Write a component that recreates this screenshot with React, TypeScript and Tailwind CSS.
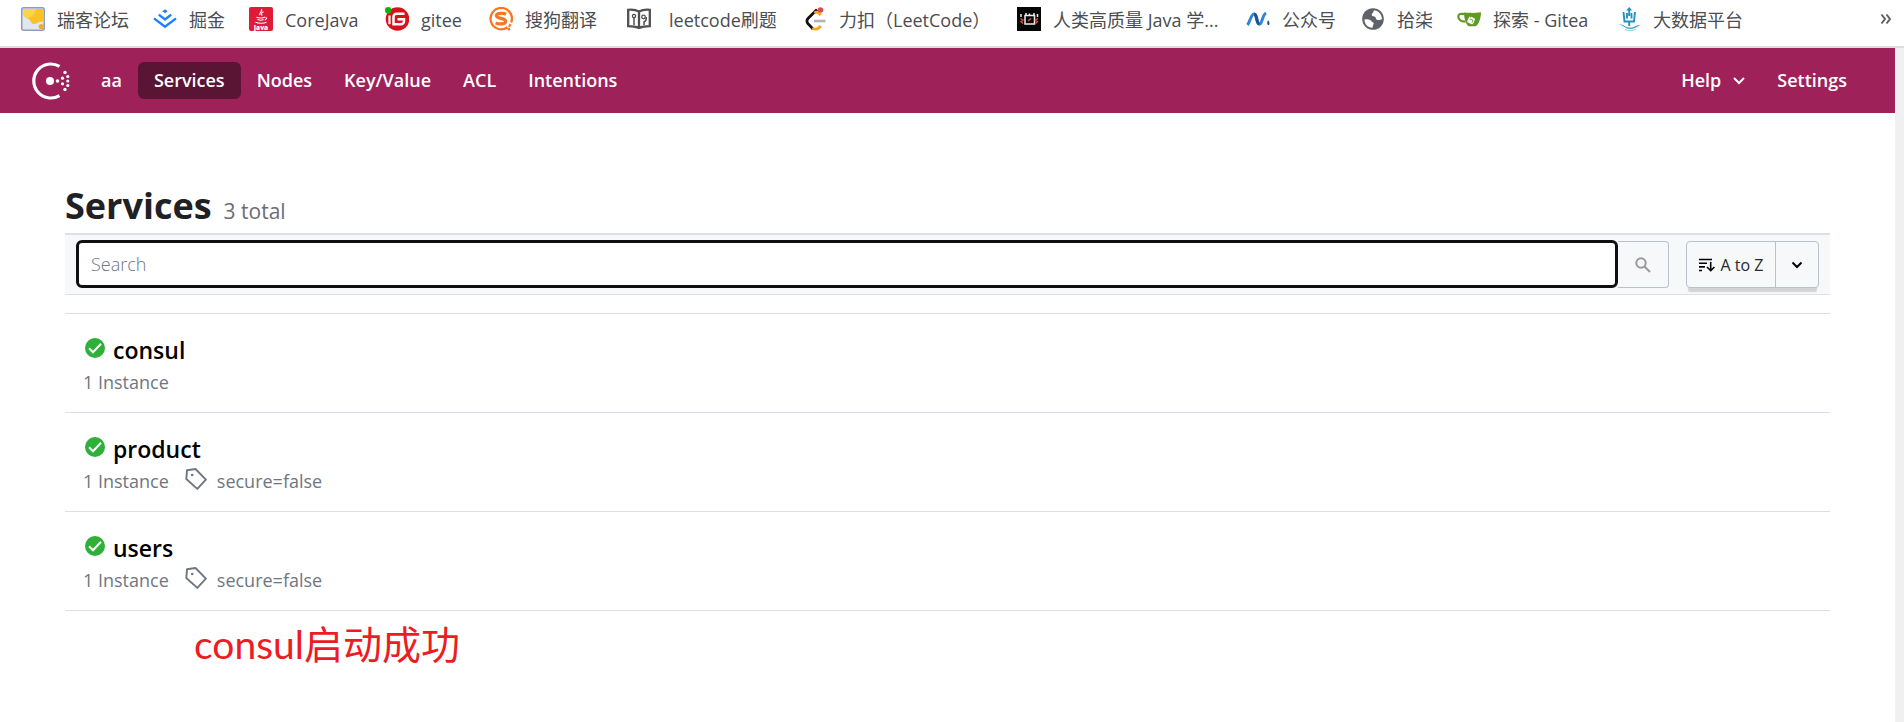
import type { ReactNode } from "react";

const services = [
    { name: "consul", instances: "1 Instance", tag: "" },
    { name: "product", instances: "1 Instance", tag: "secure=false" },
    { name: "users", instances: "1 Instance", tag: "secure=false" },
];

const navItems = ["aa", "Services", "Nodes", "Key/Value", "ACL", "Intentions"];

function Icon({ children }: { children: ReactNode }) {
    return (
        <svg viewBox="0 0 24 24" className="h-6 w-6 shrink-0" fill="none" aria-hidden="true">
            {children}
        </svg>
    );
}

const bookmarks = [
    {
        label: "瑞客论坛",
        size: "w-[132px] gap-3",
        icon: (
            <Icon>
                <rect x="0.75" y="0.75" width="22.5" height="22.5" rx="2" fill="#dfe7f1" stroke="#8c9fb8" strokeWidth="1.5" />
                <path d="M2 2h20.500v10c0 2-1 3-3.500 3-2 0-3 2-6 2-3.500 0-2.500-3.500-5.500-5C4 10.500 2 9 2 5z" fill="#fbc226" />
                <path d="M2 2h13c-1 5-4 8-9 9-3-1.500-4-3-4-6z" fill="#fdd54d" />
                <circle cx="20.300" cy="19.500" r="2.600" fill="#f9a91c" />
            </Icon>
        ),
    },
    {
        label: "掘金",
        size: "w-[96px] gap-3",
        icon: (
            <Icon>
                <path d="M12 2.200l2.600 2-2.600 2-2.600-2z" fill="#1e80ff" />
                <path d="M5.800 7.600l6.200 4.900 6.200-4.900M1 11.400l11 8.400 11-8.400" stroke="#1e80ff" strokeWidth="2.400" />
            </Icon>
        ),
    },
    {
        label: "CoreJava",
        size: "w-[136px] gap-3",
        icon: (
            <Icon>
                <rect width="24" height="24" rx="2" fill="#e11a38" />
                <path d="M12.500 2c1.500 2.500-3 3.500-1.500 6.200M14.500 4.700c-2.500 1.300-2.500 2.200-1.300 4M7.500 10.300c2 1 6.500 1 8.500-.3M8.500 12.600c2 .8 4.500.8 6 0M6.500 15.200c3 1.300 8.500 1.300 11 0M16.500 10.500c1.700.3 1 2-.7 2.500" stroke="#fff" strokeWidth="1.100" />
                <text x="12" y="22.500" fontSize="6.500" fontWeight="800" fill="#fff" textAnchor="middle" fontFamily="Open Sans, sans-serif">Java</text>
            </Icon>
        ),
    },
    {
        label: "gitee",
        size: "w-[104px] gap-3",
        icon: (
            <Icon>
                <circle cx="12.500" cy="12" r="11.800" fill="#d9111b" />
                <path d="M19.500 6.800h-8a3 3 0 0 0-3 3v7.400h7.500a3 3 0 0 0 3-3v-2h-6.500" stroke="#fff" strokeWidth="2.500" />
                <path d="M4.500 8.500v8.700" stroke="#fff" strokeWidth="2.200" />
                <circle cx="3.200" cy="3.200" r="3.200" fill="#0db30d" />
            </Icon>
        ),
    },
    {
        label: "搜狗翻译",
        size: "w-[138px] gap-3",
        icon: (
            <Icon>
                <path d="M18.500 20.300A10.700 10.700 0 1 1 22.200 15.500" stroke="#fb7420" strokeWidth="2.300" />
                <path d="M17 7.200c-2.500-1.200-9.500-1.700-9.500 1.500 0 3.600 9.200 1.600 9.200 5.500 0 3.400-7 3.200-10 1.600" stroke="#fb7420" strokeWidth="3.200" />
                <path d="M21.500 17l-1.500 3" stroke="#fb7420" strokeWidth="2" />
                <circle cx="19.800" cy="22.200" r="1.400" fill="#fb7420" />
            </Icon>
        ),
    },
    {
        label: "leetcode刷题",
        size: "w-[178px] gap-[18px]",
        icon: (
            <Icon>
                <path d="M1.200 2.800c4-.5 7.500 0 10.800 1.800 3.300-1.800 6.800-2.300 10.800-1.800v16.400c-4 0-7.500.3-10.800 1.800-3.300-1.500-6.800-1.800-10.800-1.800zM12 4.500V21" stroke="#505050" strokeWidth="2.300" />
                <path d="M7 18v-7.500M17 18v-3c2-1 2.500-3 2.300-5" stroke="#505050" strokeWidth="1.500" />
                <circle cx="7" cy="9" r="1.600" stroke="#505050" strokeWidth="1.300" />
                <circle cx="16.500" cy="10" r="1.800" stroke="#505050" strokeWidth="1.300" />
            </Icon>
        ),
    },
    {
        label: "力扣（LeetCode）",
        size: "w-[212px] gap-[10px]",
        icon: (
            <Icon>
                <path d="M12 2.500L3.200 11.200c-1.700 1.700-1.700 4 0 5.700L8 22" stroke="#111" strokeWidth="2.800" />
                <path d="M9.500 6c2-1.800 3.500-1 6.300 2M7.500 20.800c2.500 2.500 5.500 1.500 8.200-1.800" stroke="#ffa116" strokeWidth="2.800" />
                <path d="M9 14h11.500" stroke="#b3b3b3" strokeWidth="2.600" />
                <circle cx="15.500" cy="3" r="2.800" fill="#d84b52" />
            </Icon>
        ),
    },
    {
        label: "人类高质量 Java 学...",
        size: "w-[229px] gap-3",
        icon: (
            <Icon>
                <rect width="24" height="24" fill="#060606" />
                <path d="M8 8.500h9.500V17H8zM9 6v2M12.500 6.500v2M17 6v2M4 7v3M20.500 7v3" stroke="#eee" strokeWidth="1.500" />
                <path d="M3.500 11.500l2.500 1.500-2 1.500 2 2M21 11.500L18.500 13l2 1.500-2 2M11 14l3-2.500" stroke="#e0573e" strokeWidth="1.400" />
            </Icon>
        ),
    },
    {
        label: "公众号",
        size: "w-[116px] gap-3",
        icon: (
            <Icon>
                <path d="M1.500 18C4 15 5 7 8 7c3.500 0 2 10 5.500 10 3 0 2.500-9 6.500-11" stroke="#2f86d2" strokeWidth="3" />
                <path d="M8 7c3.500 0 2 10 5.500 10" stroke="#1a5496" strokeWidth="3.200" />
                <path d="M22.500 13.500c1 2 1.500 4.500 0 4.500s-1.500-2-1-4z" fill="#17558f" />
            </Icon>
        ),
    },
    {
        label: "拾柒",
        size: "w-[95px] gap-[11px]",
        icon: (
            <Icon>
                <circle cx="11" cy="12" r="10.800" fill="#5f6368" />
                <path d="M2.500 12.500c2.500-.8 7-.3 7.500 2.500 2 0 2 1.500 1 3.500l-.500 2.200C5.500 20.500 2.500 17 2.500 12.500zM12.500 3.200c-2 1-.5 2.500-2.500 3.300-1 2 .5 3 2.500 3 1.500 0 1 3 3 3.500 2 .2 3.500-.2 4.500-1-.2-4.500-3-8-7.500-8.800z" fill="#fff" />
            </Icon>
        ),
    },
    {
        label: "探索 - Gitea",
        size: "w-[160px] gap-3",
        icon: (
            <Icon>
                <path d="M7.500 7.200C4 6.500 1.300 6.700 1.300 9.500c0 3.500 3.200 5.300 7.200 5" stroke="#609926" strokeWidth="2.200" />
                <path d="M7 5.500c5.500.7 11 .6 17-.2 0 5-2 12.500-5.500 14h-7C9 17 7 12 7 5.500z" fill="#609926" />
                <rect x="11" y="10" width="6.500" height="6.500" rx="1.200" transform="rotate(24 14 13)" fill="#fff" />
                <path d="M13.500 5.500v5M13 12l3 1.300-1 2.200" stroke="#609926" strokeWidth="0.900" />
            </Icon>
        ),
    },
    {
        label: "大数据平台",
        size: "w-[140px] gap-3",
        icon: (
            <Icon>
                <path d="M6.500 5l1 9.500h9.500l1-9.500M12.200 19V14.500M12.200 9V2M10 6v5.500M14.500 6v5.500" stroke="#2390bd" strokeWidth="1.900" />
                <path d="M12.200 0l3 3.500h-6z" fill="#2390bd" />
                <path d="M0 17c6-.5 8 3.500 13 3.500 5 0 6-3 11-2.500-3 .5-5 4-11 4-5 0-7-4.500-13-5z" fill="#39a5c9" />
                <path d="M8 22.500c4 1.500 7 1.300 11 0" stroke="#8acbe0" />
            </Icon>
        ),
    },
];

function BookmarksBar() {
    return (
        <nav aria-label="Bookmarks" className="flex h-12 items-center justify-between border-b-2 border-[#dcdcdc] bg-white pb-2 pl-[21px] pr-3">
            <ul className="flex">
                {bookmarks.map((item) => (
                    <li key={item.label} className={item.size}>
                        <a href="#" className="flex items-center gap-[inherit] whitespace-nowrap text-lg leading-6 text-[#4a4d51]">
                            {item.icon}
                            <span className="pt-0.5">{item.label}</span>
                        </a>
                    </li>
                ))}
            </ul>
            <button type="button" aria-label="More bookmarks" className="text-[#5f6368]">
                <svg viewBox="0 0 12 12" className="h-3 w-3" fill="none" stroke="currentColor" strokeWidth="2" aria-hidden="true">
                    <path d="M1.500 1.500L5 6l-3.500 4.500M6.500 1.500L10 6l-3.500 4.500" />
                </svg>
            </button>
        </nav>
    );
}

function Logo() {
    return (
        <svg viewBox="0 0 38 38" className="h-[38px] w-[38px]" fill="#fff" aria-hidden="true">
            <path d="M27.500 4.400A17 17 0 1 0 27.500 33.600" fill="none" stroke="#fff" strokeWidth="3.200" />
            <circle cx="18" cy="19" r="4" />
            <circle cx="25.500" cy="19" r="1.800" />
            <circle cx="30.500" cy="16.200" r="1.600" />
            <circle cx="30.500" cy="21.800" r="1.600" />
            <circle cx="33" cy="10.500" r="1.700" />
            <circle cx="33" cy="27.500" r="1.700" />
            <circle cx="35.800" cy="14.500" r="1.600" />
            <circle cx="35.800" cy="19" r="1.600" />
            <circle cx="35.800" cy="23.500" r="1.600" />
        </svg>
    );
}

function Header() {
    return (
        <header className="flex h-[65px] items-center justify-between bg-[#9e2159] pl-8 pr-8 text-lg font-semibold text-white">
            <div className="flex items-center gap-[15px]">
                <a href="#" aria-label="Consul">
                    <Logo />
                </a>
                <nav className="flex">
                    {navItems.map((item) => (
                        <a
                            key={item}
                            href="#"
                            className={`rounded-md px-4 py-1 leading-[29px] ${item === "Services" ? "bg-[#5a1434]" : ""}`}
                        >
                            {item}
                        </a>
                    ))}
                </nav>
            </div>
            <div className="flex items-center">
                <button type="button" className="flex items-center gap-3 px-4 leading-[29px]">
                    Help
                    <svg viewBox="0 0 12 8" className="h-2 w-3" fill="none" stroke="currentColor" strokeWidth="2" aria-hidden="true">
                        <path d="M1 1l5 5 5-5" />
                    </svg>
                </button>
                <a href="#" className="px-4 leading-[29px]">Settings</a>
            </div>
        </header>
    );
}

function SearchBar() {
    return (
        <form className="flex items-end border-b border-t-2 border-[#dce0e6] bg-[#f7f8fa] pb-[6px] pl-[11px] pr-[11px] pt-[5px]">
            <input
                type="text"
                aria-label="Search"
                placeholder="Search"
                className="h-12 min-w-0 flex-1 rounded-md border-[3px] border-[#101010] bg-white px-3 text-lg font-light outline-none placeholder:text-[#6d7685]"
            />
            <button type="button" aria-label="Submit search" className="flex h-[47px] w-[51px] items-center justify-center rounded-r-sm border border-l-0 border-[#bac1cc] text-[#9a9a9a]">
                <svg viewBox="0 0 16 16" className="h-4 w-4" fill="none" stroke="currentColor" strokeWidth="2" aria-hidden="true">
                    <circle cx="6" cy="6" r="4.700" />
                    <path d="M9.500 9.500l5.500 5.500" />
                </svg>
            </button>
            <div className="ml-[17px] flex h-[47px] rounded-sm border border-[#bac1cc] bg-[#f7f8fa] shadow-[0_6px_1px_-2px_#d2d4d6]">
                <button type="button" className="flex w-[88px] items-center justify-center gap-[6px] whitespace-nowrap text-base text-[#25282d]">
                    <svg viewBox="0 0 16 14" className="h-[14px] w-4 shrink-0" fill="none" stroke="#000" strokeWidth="1.600" aria-hidden="true">
                        <path d="M0 1.500h13M0 5.200h8M0 8.900h6M0 12.500h3M11.700 4v8.500M8 9l3.700 3.700L15.400 9" />
                    </svg>
                    A to Z
                </button>
                <button type="button" aria-label="Sort options" className="flex w-[43px] items-center justify-center border-l border-[#bac1cc]">
                    <svg viewBox="0 0 12 8" className="h-2 w-3" fill="none" stroke="#000" strokeWidth="2" aria-hidden="true">
                        <path d="M1.500 1.500L6 6l4.500-4.500" />
                    </svg>
                </button>
            </div>
        </form>
    );
}

function ServiceList() {
    return (
        <ul className="mt-[18px] border-t border-[#dce0e6]">
            {services.map((service) => (
                <li key={service.name} className="h-[99px] border-b border-[#dce0e6] pl-[18px] pt-[21px]">
                    <h2 className="flex items-center gap-2 pl-0.5 text-[23px] font-semibold leading-[30px] text-black">
                        <svg viewBox="0 0 20 20" className="mb-1 h-5 w-5" aria-hidden="true">
                            <circle cx="10" cy="10" r="10" fill="#2eb039" />
                            <path d="M4 10.200l4 4 8-8.500" fill="none" stroke="#fff" strokeWidth="2" />
                        </svg>
                        <a href="#">{service.name}</a>
                    </h2>
                    <div className="flex items-center text-lg leading-[34px] text-[#6f7682]">
                        <span>{service.instances}</span>
                        {service.tag && (
                            <span className="ml-4 flex items-center gap-[10px]">
                                <svg viewBox="0 0 22 22" className="mb-1 h-[22px] w-[22px]" fill="none" stroke="currentColor" strokeWidth="1.900" strokeLinejoin="round" aria-hidden="true">
                                    <path d="M2 2.300L10.500 1l10.400 10.700-8.600 9.200L1.300 11z" />
                                    <circle cx="7.200" cy="7" r="1.300" fill="currentColor" stroke="none" />
                                </svg>
                                {service.tag}
                            </span>
                        )}
                    </div>
                </li>
            ))}
        </ul>
    );
}

export default function App() {
    return (
        <div className="flex min-h-screen flex-col bg-white font-['Open_Sans','Noto_Sans_CJK_SC',sans-serif]">
            <BookmarksBar />
            <div className="flex flex-1">
                <div className="min-w-0 flex-1">
                    <Header />
                    <main className="px-[65px] pt-[69px]">
                        <div className="flex items-baseline gap-3 pb-[3px]">
                            <h1 className="text-4xl font-bold leading-[48px] text-[#1f2124]">Services</h1>
                            <span className="text-[21px] leading-8 text-[#6a6d73]">3 total</span>
                        </div>
                        <SearchBar />
                        <ServiceList />
                        <p className="pl-[129px] pt-2 font-['Lato','Noto_Sans_CJK_SC',sans-serif] text-[39px] leading-[50px] text-[#ed1c24]">
                            consul启动成功
                        </p>
                    </main>
                </div>
                <div className="w-[9px] bg-[#f0f0f0]" />
            </div>
        </div>
    );
}
